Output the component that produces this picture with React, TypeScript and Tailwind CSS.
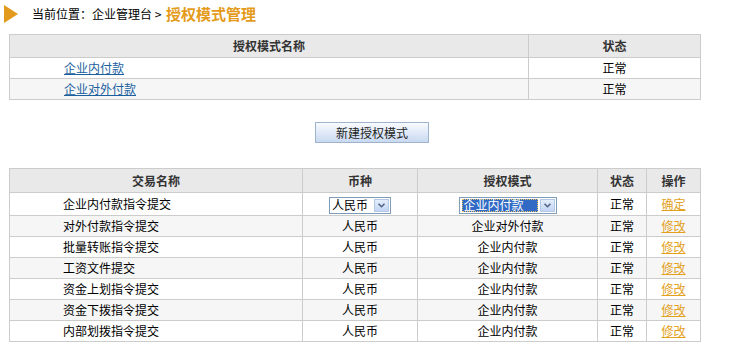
import React from "react";

const topRows = [
  { name: "企业内付款", status: "正常" },
  { name: "企业对外付款", status: "正常" },
];

const tradeRows = [
  { name: "对外付款指令提交", mode: "企业对外付款" },
  { name: "批量转账指令提交", mode: "企业内付款" },
  { name: "工资文件提交", mode: "企业内付款" },
  { name: "资金上划指令提交", mode: "企业内付款" },
  { name: "资金下拨指令提交", mode: "企业内付款" },
  { name: "内部划拨指令提交", mode: "企业内付款" },
];

function ArrowBox() {
  return (
    <span className="flex h-[13px] w-[15px] items-center justify-center border border-[#b5c8e6] bg-gradient-to-b from-[#e4edfb] to-[#c3d5f3]">
      <svg width="7" height="5" viewBox="0 0 7 5">
        <path d="M0.5 0.8 L3.5 3.8 L6.5 0.8" fill="none" stroke="#4d6185" strokeWidth="1.5" />
      </svg>
    </span>
  );
}

function FakeSelect({ value, width, active }: { value: string; width: string; active?: boolean }) {
  return (
    <span className={`inline-flex h-[17px] items-center justify-between border border-[#7f9db9] bg-white pl-[2px] pr-[1px] align-middle ${width}`}>
      {active ? (
        <span className="flex h-[13px] flex-1 items-center border border-dotted border-[#f0c060] bg-[#316ac5] pl-[1px] text-left leading-none text-white">
          {value}
        </span>
      ) : (
        <span className="flex-1 text-left leading-none text-black">{value}</span>
      )}
      <span className={active ? "ml-[2px]" : ""}>
        <ArrowBox />
      </span>
    </span>
  );
}

export default function App() {
  const cell = "border border-[#cccccc]";
  return (
    <div className="min-h-[355px] w-[745px] bg-white text-[12px] text-black" style={{ fontFamily: '"Noto Sans CJK SC", "Liberation Sans", sans-serif' }}>
      <div className="flex h-[28px] items-center">
        <svg width="18" height="20" viewBox="0 0 18 20" className="ml-[2px]">
          <path d="M2 1 L16 10 L2 19 Z" fill="#e39a1c" />
        </svg>
        <span className="ml-[12px] whitespace-pre">当前位置：企业管理台 &gt; </span>
        <span className="ml-[2px] text-[15px] font-bold text-[#e49b1a]">授权模式管理</span>
      </div>

      <table className="ml-[9px] mt-[6px] w-[692px] border-collapse">
        <thead>
          <tr className="h-[23px] bg-[#e9e9e9] font-bold text-[#333]">
            <th className={`${cell} w-[519px]`}>授权模式名称</th>
            <th className={cell}>状态</th>
          </tr>
        </thead>
        <tbody>
          {topRows.map((r, i) => (
            <tr key={r.name} className={`h-[21px] ${i % 2 ? "bg-[#f6f6f6]" : "bg-white"}`}>
              <td className={`${cell} pl-[54px]`}>
                <a className="text-[#1b5f9e] underline">{r.name}</a>
              </td>
              <td className={`${cell} text-center`}>{r.status}</td>
            </tr>
          ))}
        </tbody>
      </table>

      <div className="mt-[22px] flex">
        <button className="ml-[315px] h-[21px] w-[114px] border border-[#9fb3cf] bg-gradient-to-b from-[#f8fbff] to-[#c9d9f0] text-[12px] text-[#222]">
          新建授权模式
        </button>
      </div>

      <table className="ml-[9px] mt-[25px] w-[692px] border-collapse">
        <thead>
          <tr className="h-[24px] bg-[#e9e9e9] font-bold text-[#333]">
            <th className={`${cell} w-[293px]`}>交易名称</th>
            <th className={`${cell} w-[115px]`}>币种</th>
            <th className={`${cell} w-[180px]`}>授权模式</th>
            <th className={`${cell} w-[49px]`}>状态</th>
            <th className={cell}>操作</th>
          </tr>
        </thead>
        <tbody>
          <tr className="h-[23px] bg-white">
            <td className={`${cell} pl-[53px]`}>企业内付款指令提交</td>
            <td className={`${cell} text-center`}>
              <FakeSelect value="人民币" width="w-[62px]" />
            </td>
            <td className={`${cell} text-center`}>
              <FakeSelect value="企业内付款" width="w-[98px]" active />
            </td>
            <td className={`${cell} text-center`}>正常</td>
            <td className={`${cell} text-center`}>
              <a className="text-[#e3a11e] underline">确定</a>
            </td>
          </tr>
          {tradeRows.map((r, i) => (
            <tr key={r.name} className={`h-[21px] ${i % 2 ? "bg-white" : "bg-[#f6f6f6]"}`}>
              <td className={`${cell} pl-[53px]`}>{r.name}</td>
              <td className={`${cell} text-center`}>人民币</td>
              <td className={`${cell} text-center`}>{r.mode}</td>
              <td className={`${cell} text-center`}>正常</td>
              <td className={`${cell} text-center`}>
                <a className="text-[#e3a11e] underline">修改</a>
              </td>
            </tr>
          ))}
        </tbody>
      </table>
    </div>
  );
}
